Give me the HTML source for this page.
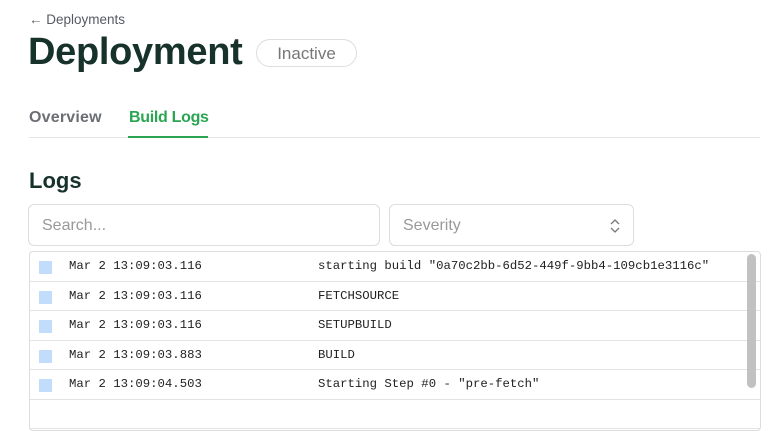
<!DOCTYPE html>
<html><head><style>
body{margin:0;width:781px;height:400px;overflow:hidden;background:#fff;font-family:"Liberation Sans",sans-serif;}
.back{position:absolute;left:29px;top:12px;font-size:13.5px;color:#555b60;}
h1{position:absolute;left:28px;top:31px;margin:0;font-size:38px;font-weight:bold;color:#17322b;letter-spacing:-0.3px;}
.badge{position:absolute;left:256px;top:39px;width:101px;height:28px;border:1px solid #ddd;border-radius:15px;box-sizing:border-box;text-align:center;line-height:27px;font-size:17px;color:#777;}
.tab{position:absolute;top:109px;font-size:16px;font-weight:bold;}
.line{position:absolute;left:29px;top:137px;width:731px;height:1px;background:#e5e5e5;}
.ul{position:absolute;left:128px;top:136px;width:80px;height:2px;background:#2aa653;}
h2{position:absolute;left:29px;top:168px;margin:0;font-size:22px;font-weight:bold;color:#17322b;}
.inp{position:absolute;top:204px;height:42px;border:1px solid #ddd;border-radius:6px;box-sizing:border-box;font-size:16px;color:#999;line-height:42px;padding-left:13px;}
.tbl{position:absolute;left:29px;top:251px;width:732px;height:180px;border:1px solid #ddd;border-radius:4px;box-sizing:border-box;overflow:hidden;}
.row{height:29.5px;border-bottom:1px solid #e3e3e3;box-sizing:border-box;position:relative;font-family:"Liberation Mono",monospace;font-size:12.3px;color:#222;line-height:28px;}
.sq{position:absolute;left:9px;top:9px;width:13px;height:13px;background:#c2dcfb;}
.ts{position:absolute;left:39px;}
.msg{position:absolute;left:288px;}
.sb{position:absolute;left:747px;top:254px;width:9px;height:134px;border-radius:5px;background:#c1c1c1;}
</style></head><body>
<div class="back">← Deployments</div>
<h1>Deployment</h1>
<div class="badge">Inactive</div>
<div class="tab" style="left:29px;color:#6b6f73;letter-spacing:0.2px">Overview</div>
<div class="tab" style="left:129px;color:#2aa653;letter-spacing:-0.3px">Build Logs</div>
<div class="line"></div><div class="ul"></div>
<h2>Logs</h2>
<div class="inp" style="left:28px;width:352px">Search...</div>
<div class="inp" style="left:389px;width:245px">Severity
<svg style="position:absolute;right:12px;top:13px" width="12" height="16" viewBox="0 0 12 16"><path d="M2 6l4-4 4 4M2 10l4 4 4-4" fill="none" stroke="#777" stroke-width="1.3"/></svg></div>
<div class="tbl">
<div class="row"><div class="sq"></div><span class="ts">Mar 2 13:09:03.116</span><span class="msg">starting build "0a70c2bb-6d52-449f-9bb4-109cb1e3116c"</span></div>
<div class="row"><div class="sq"></div><span class="ts">Mar 2 13:09:03.116</span><span class="msg">FETCHSOURCE</span></div>
<div class="row"><div class="sq"></div><span class="ts">Mar 2 13:09:03.116</span><span class="msg">SETUPBUILD</span></div>
<div class="row"><div class="sq"></div><span class="ts">Mar 2 13:09:03.883</span><span class="msg">BUILD</span></div>
<div class="row"><div class="sq"></div><span class="ts">Mar 2 13:09:04.503</span><span class="msg">Starting Step #0 - "pre-fetch"</span></div>
<div class="row"></div>
</div>
<div class="sb"></div>
</body></html>
